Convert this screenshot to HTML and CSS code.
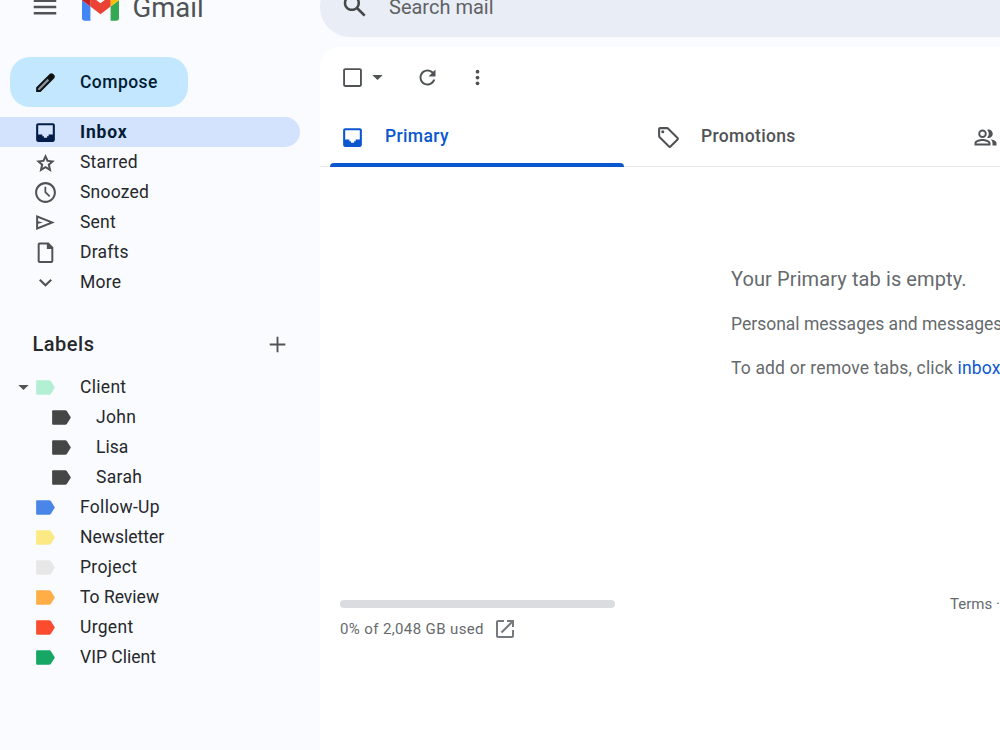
FILE: index.html
```html
<!DOCTYPE html>
<html lang="en">
<head>
    <meta charset="UTF-8">
    <meta name="viewport" content="width=device-width, initial-scale=1.0">
    <title>Gmail</title>
    <link rel="stylesheet" href="styles.css">
</head>
<body>
    <svg class="sprite">
        <symbol id="tag" viewBox="0 0 24 24"><path d="M4.2 5H15.5c.7 0 1.2.3 1.6.8L21 12l-3.900 6.200c-.4.5-.9.8-1.6.8H4.2C3.500 19 3 18.500 3 17.800V6.200C3 5.500 3.500 5 4.200 5z"/></symbol>
        <symbol id="inbox" viewBox="0 0 24 24"><path d="M19 3H5c-1.100 0-2 .9-2 2v14c0 1.100.9 2 2 2h14c1.100 0 2-.9 2-2V5c0-1.100-.9-2-2-2zm0 11h-4v1.500h-1.500V17h-3v-1.500H9V14H5V5h14v9z"/></symbol>
        <symbol id="caret" viewBox="0 0 24 24"><path d="M7 9.700l5 4.800 5-4.800z"/></symbol>
    </svg>

    <header class="header">
        <div class="brand">
            <svg class="menu-icon" viewBox="0 0 24 24"><path d="M3 18h18v-2H3v2zm0-5h18v-2H3v2zm0-7v2h18V6H3z"/></svg>
            <svg class="logo" viewBox="52 42 88 66">
                <path fill="#4285f4" d="M58 108h14V74L52 59v43c0 3.320 2.690 6 6 6"/>
                <path fill="#34a853" d="M120 108h14c3.320 0 6-2.690 6-6V59l-20 15"/>
                <path fill="#fbbc04" d="M120 48v26l20-15v-8c0-7.420-8.470-11.650-14.400-7.200"/>
                <path fill="#ea4335" d="M72 74V48l24 18 24-18v26L96 92"/>
                <path fill="#c5221f" d="M52 51v8l20 15V48l-5.600-4.200c-5.940-4.450-14.400-.22-14.400 7.200"/>
            </svg>
            <span class="brand-name">Gmail</span>
        </div>
        <div class="search">
            <svg class="search-icon" viewBox="0 0 24 24"><path d="M20.490 19l-5.730-5.730C15.530 12.200 16 10.910 16 9.500 16 5.910 13.090 3 9.500 3S3 5.910 3 9.500 5.910 16 9.500 16c1.410 0 2.700-.47 3.770-1.240L19 20.490 20.490 19zM5 9.500C5 7.010 7.010 5 9.500 5S14 7.010 14 9.500 11.990 14 9.500 14 5 11.990 5 9.500z"/></svg>
            <span class="search-text">Search mail</span>
        </div>
    </header>

    <div class="layout">
        <aside class="sidebar">
            <button class="compose">
                <svg class="icon" viewBox="0 0 24 24"><path fill="#85959f" d="M4.500 17L14 7.500l2.500 2.500L7 19.500H4.500z"/><path fill-rule="evenodd" d="M20.400 4.900l-1.300-1.300c-.8-.8-2.100-.8-2.900 0L3 16.800V21h4.200L20.400 7.800c.8-.8.8-2.100 0-2.900zM6.400 19.200H4.900v-1.500L14 8.500l1.500 1.500z"/></svg>
                <span>Compose</span>
            </button>
            <nav>
                <a class="item active"><svg class="icon"><use href="#inbox"/></svg><span>Inbox</span></a>
                <a class="item"><svg class="icon" viewBox="0 0 24 24"><path d="M21 10.200l-6.300-.6L12 3.800 9.300 9.600 3 10.200l4.700 4.200L6.300 21l5.700-3.400 5.700 3.400-1.400-6.600zm-9 5.100l-2.900 1.800.8-3.400-2.500-2.200 3.300-.3L12 8.300l1.300 2.900 3.300.3-2.500 2.200.8 3.400z"/></svg><span>Starred</span></a>
                <a class="item"><svg class="icon" viewBox="0 0 24 24"><path d="M12 2C6.500 2 2 6.500 2 12s4.500 10 10 10 10-4.500 10-10S17.500 2 12 2zm0 18c-4.400 0-8-3.600-8-8s3.600-8 8-8 8 3.600 8 8-3.600 8-8 8zm.7-13.500H11V12l4.400 4.200 1.200-1.200-3.900-3.700z"/></svg><span>Snoozed</span></a>
                <a class="item"><svg class="icon" viewBox="0 0 24 24"><path d="M3 19.200l18-7.200L3 4.800v14.400zm1.900-2.900v-3l4.600-1.300-4.600-1.300v-3L15.900 12z"/></svg><span>Sent</span></a>
                <a class="item"><svg class="icon" viewBox="0 0 24 24"><path d="M15 2.500H6.300c-1.100 0-1.800.8-1.800 1.800v15.900c0 1 .7 1.800 1.800 1.800h11.400c1.100 0 1.800-.8 1.800-1.800V7zm2.600 17.600H6.400V4.400h6.900v4.200h4.300z"/></svg><span>Drafts</span></a>
                <a class="item"><svg class="icon" viewBox="0 0 24 24"><path d="M16.800 8.600L12 13.200 7.200 8.600 5.800 10l6.200 6 6.200-6z"/></svg><span>More</span></a>
            </nav>

            <div class="labels-title">
                <h2>Labels</h2>
                <svg class="icon" viewBox="0 0 24 24"><path d="M19.500 12.900h-6.600v6.600h-1.800v-6.600H4.500v-1.800h6.600V4.500h1.800v6.600h6.600z"/></svg>
            </div>
            <nav class="labels">
                <a class="item parent"><svg class="icon arrow"><use href="#caret"/></svg><svg class="icon mint"><use href="#tag"/></svg><span class="wide">Client</span></a>
                <a class="item child"><svg class="icon"><use href="#tag"/></svg><span class="wide">John</span></a>
                <a class="item child"><svg class="icon"><use href="#tag"/></svg><span>Lisa</span></a>
                <a class="item child"><svg class="icon"><use href="#tag"/></svg><span class="wide">Sarah</span></a>
                <a class="item"><svg class="icon blue"><use href="#tag"/></svg><span class="wide">Follow-Up</span></a>
                <a class="item"><svg class="icon yellow"><use href="#tag"/></svg><span>Newsletter</span></a>
                <a class="item"><svg class="icon gray"><use href="#tag"/></svg><span class="wide">Project</span></a>
                <a class="item"><svg class="icon orange"><use href="#tag"/></svg><span>To Review</span></a>
                <a class="item"><svg class="icon red"><use href="#tag"/></svg><span class="wide">Urgent</span></a>
                <a class="item"><svg class="icon green"><use href="#tag"/></svg><span>VIP Client</span></a>
            </nav>
        </aside>

        <main class="panel">
            <div class="toolbar">
                <svg class="icon" viewBox="0 0 24 24"><path d="M19 3H5c-1.100 0-2 .9-2 2v14c0 1.100.9 2 2 2h14c1.100 0 2-.9 2-2V5c0-1.100-.9-2-2-2zm.2 16.200H4.800V4.800h14.400z"/></svg>
                <svg class="icon"><use href="#caret"/></svg>
                <svg class="icon refresh" viewBox="-.5 -.5 25 25"><path d="M17.650 6.350C16.200 4.900 14.210 4 12 4c-4.420 0-7.990 3.580-7.990 8s3.570 8 7.990 8c3.730 0 6.840-2.550 7.730-6h-2.080c-.82 2.330-3.040 4-5.650 4-3.310 0-6-2.690-6-6s2.690-6 6-6c1.660 0 3.140.69 4.220 1.780L13 11h7V4l-2.350 2.350z"/></svg>
                <svg class="icon dots" viewBox="0 0 24 24"><circle cx="12" cy="6.400" r="1.800"/><circle cx="12" cy="12" r="1.800"/><circle cx="12" cy="17.600" r="1.800"/></svg>
            </div>

            <div class="tabs">
                <div class="tab selected"><svg class="icon"><use href="#inbox"/></svg><span>Primary</span></div>
                <div class="tab">
                    <svg class="icon" viewBox="0 0 24 24"><path d="M12.200 2.600c-.4-.4-.9-.6-1.400-.6H4c-1.100 0-2 .9-2 2v6.800c0 .5.2 1 .6 1.400l9.200 9.200c.8.8 2 .8 2.800 0l6.800-6.800c.8-.8.8-2 0-2.800zm1 17.400L4 10.800V4h6.800l9.200 9.200z"/><circle cx="6.500" cy="6.500" r="1.500"/></svg>
                    <span>Promotions</span>
                </div>
                <div class="tab people">
                    <svg class="icon" viewBox="-.5 -.5 25 25"><path d="M9 12.500a4.250 4.250 0 1 0 0-8.500 4.250 4.250 0 0 0 0 8.500zm0-6.600a2.350 2.350 0 1 1 0 4.700 2.350 2.350 0 0 1 0-4.700zM9 13.500c-2.700 0-8 1.300-8 4V20h16v-2.500c0-2.700-5.300-4-8-4zm6 4.600H3v-.6c0-.8 3.200-2.100 6-2.100s6 1.300 6 2.100zM15 12.500a4.250 4.250 0 0 0 0-8.500c-.5 0-1 .1-1.400.3a6 6 0 0 1 0 7.900c.4.2.9.3 1.400.3zM17 13.700c1.200.9 2 2.200 2 3.800V20h4v-2.500c0-2.200-3.400-3.400-6-3.800z"/></svg>
                </div>
            </div>

            <section class="empty">
                <h3>Your Primary tab is empty.</h3>
                <p>Personal messages and messages</p>
                <p class="hint">To add or remove tabs, click <a>inbox</a></p>
            </section>

            <footer class="footer">
                <div class="storage">
                    <div class="bar"></div>
                    <div class="usage">
                        <span>0% of 2,048 GB used</span>
                        <svg class="icon" viewBox="0 0 24 24"><path d="M19 19H5V5h6V3H5c-1.100 0-2 .9-2 2v14c0 1.100.9 2 2 2h14c1.100 0 2-.9 2-2v-6h-2v6zM14 3v2h3.590l-9.830 9.830 1.410 1.410L19 6.410V10h2V3h-7z"/></svg>
                    </div>
                </div>
                <div class="terms">Terms ·</div>
            </footer>
        </main>
    </div>
</body>
</html>
```
FILE: styles.css
```css
* {
    box-sizing: border-box;
}
body {
    margin: 0;
    height: 750px;
    overflow: hidden;
    background-color: #f9fbff;
    font-family: Roboto, Arial, sans-serif;
    font-size: 17.5px;
    color: #26282b;
}
.sprite {
    display: none;
}
.icon {
    width: 25px;
    height: 25px;
    flex-shrink: 0;
    fill: #505355;
}

/* header */
.header {
    display: flex;
    align-items: center;
    height: 80px;
    margin-top: -33px;
}
.brand {
    display: flex;
    align-items: center;
    width: 320px;
    padding-left: 30px;
}
.menu-icon {
    width: 30px;
    height: 30px;
    fill: #505355;
}
.logo {
    width: 37px;
    height: 28px;
    margin-left: 21.5px;
}
.brand-name {
    margin-left: 14px;
    font-size: 27.5px;
    color: #505355;
}
.search {
    display: flex;
    align-items: center;
    flex: 1;
    height: 60px;
    padding-left: 20px;
    border-radius: 30px 0 0 30px;
    background-color: #e9edf6;
}
.search-icon {
    width: 30px;
    height: 30px;
    margin-top: -3px;
    fill: #444746;
}
.search-text {
    margin-left: 19px;
    font-size: 20px;
    color: #5f6265;
}

.layout {
    display: flex;
    height: 703px;
}

/* sidebar */
.sidebar {
    width: 320px;
    padding-top: 10px;
}
.compose {
    display: flex;
    align-items: center;
    gap: 22px;
    width: 178px;
    height: 50px;
    margin: 0 0 10px 10px;
    padding: 0 0 0 23px;
    border: none;
    border-radius: 20px;
    background-color: #c2e7ff;
    font-family: inherit;
    font-size: 17.5px;
    font-weight: 500;
    letter-spacing: 0.45px;
    color: #001d35;
}
.compose .icon {
    fill: #111;
}
.item {
    display: flex;
    align-items: center;
    gap: 22px;
    width: 300px;
    height: 30px;
    padding-left: 33px;
    letter-spacing: 0.2px;
}
.active {
    border-radius: 0 15px 15px 0;
    background-color: #d3e3fd;
    font-weight: 700;
    letter-spacing: 0.8px;
    color: #001d35;
}
.active .icon {
    fill: #041e49;
}
.labels-title {
    display: flex;
    align-items: center;
    justify-content: space-between;
    height: 56px;
    margin-top: 19px;
    padding: 0 30px 0 32.5px;
}
.labels-title h2 {
    margin: 0;
    font-size: 20px;
    font-weight: 500;
    letter-spacing: 0.5px;
}
.labels .item {
    letter-spacing: 0;
}
.labels .wide {
    letter-spacing: 0.3px;
}
.parent {
    padding-left: 11px;
}
.parent .arrow {
    margin-right: -25px;
}
.child {
    padding-left: 49px;
}
.child .icon {
    fill: #444746;
}
.labels .mint { fill: #b3efd3; }
.labels .blue { fill: #4986e7; }
.labels .yellow { fill: #fbe983; }
.labels .gray { fill: #e7e7e7; }
.labels .orange { fill: #ffad46; }
.labels .red { fill: #fb4c2f; }
.labels .green { fill: #16a765; }

/* mail panel */
.panel {
    width: 680px;
    overflow: hidden;
    border-radius: 20px 0 0 0;
    background-color: #fff;
}
.toolbar {
    display: flex;
    align-items: center;
    height: 60px;
    padding-left: 20px;
}
.refresh,
.dots {
    margin-left: 25px;
}
.tabs {
    display: flex;
    height: 60px;
    border-bottom: 1px solid #e8ebed;
}
.tab {
    display: flex;
    align-items: center;
    flex-shrink: 0;
    gap: 20px;
    width: 316px;
    height: 60px;
    padding-left: 20px;
    font-weight: 500;
    letter-spacing: 0.35px;
    color: #505355;
}
.tab span {
    padding-bottom: 2px;
}
.people {
    padding-left: 21px;
}
.selected {
    position: relative;
    color: #0b57d0;
}
.selected::after {
    content: "";
    position: absolute;
    left: 10px;
    bottom: 0;
    width: 294px;
    height: 4px;
    border-radius: 4px 4px 0 0;
    background-color: #0b57d0;
}
.selected .icon {
    fill: #0b57d0;
}
.empty {
    height: 341px;
    padding: 96px 0 0 411px;
    color: #666a6d;
    white-space: nowrap;
}
.empty h3 {
    margin: 0 0 16px;
    font-size: 20px;
    font-weight: 400;
    line-height: 32px;
    letter-spacing: 0.1px;
}
.empty p {
    margin: 0 0 18px;
    line-height: 26px;
}
.empty .hint {
    letter-spacing: 0.16px;
}
.empty a {
    color: #0b57d0;
}
.footer {
    display: flex;
    justify-content: space-between;
    margin-top: 92px;
    padding-left: 20px;
    font-size: 15px;
    color: #666a6d;
}
.storage {
    width: 275px;
}
.bar {
    height: 8px;
    border-radius: 4px;
    background-color: #dadce0;
}
.usage {
    display: flex;
    align-items: center;
    gap: 9px;
    height: 42px;
    letter-spacing: 0.38px;
}
.usage .icon {
    width: 24px;
    height: 24px;
    margin-top: -1px;
    fill: #747a80;
}
.terms {
    width: 50px;
    line-height: 8px;
    white-space: nowrap;
}
```
